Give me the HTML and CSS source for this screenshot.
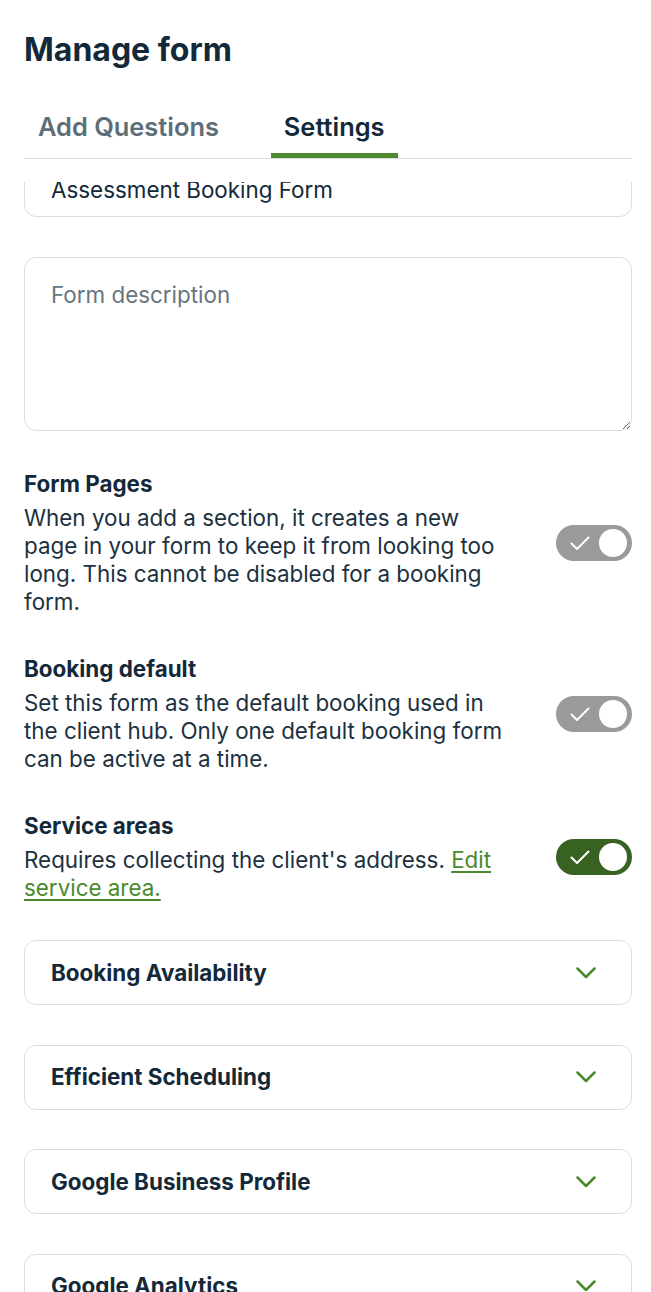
FILE: index.html
```html
<!DOCTYPE html>
<html lang="en">
<head>
<meta charset="utf-8">
<title>Manage form</title>
<link rel="stylesheet" href="styles.css">
</head>
<body>
<div class="page">
  <header class="header">
    <h1 class="title">Manage form</h1>
    <nav class="tabs">
      <div class="tab">Add Questions</div>
      <div class="tab tab-active">Settings</div>
    </nav>
  </header>
  <main class="scroll">
    <div class="scroll-inner">
      <input class="field" type="text" value="Assessment Booking Form">
      <textarea class="area" placeholder="Form description"></textarea>

      <section class="setting">
        <div class="setting-text">
          <div class="setting-title">Form Pages</div>
          <div class="setting-desc">When you add a section, it creates a new page in your form to keep it from looking too long. This cannot be disabled for a booking form.</div>
        </div>
        <div class="toggle toggle-off">
          <svg class="check" width="20" height="14" viewBox="0 0 20 14"><path d="M1.5 7.5 L7 13 L18.5 1.5" fill="none" stroke="#fff" stroke-width="2" stroke-linecap="round" stroke-linejoin="round"/></svg>
          <span class="knob"></span>
        </div>
      </section>

      <section class="setting">
        <div class="setting-text">
          <div class="setting-title">Booking default</div>
          <div class="setting-desc">Set this form as the default booking used in the client hub. Only one default booking form can be active at a time.</div>
        </div>
        <div class="toggle toggle-off">
          <svg class="check" width="20" height="14" viewBox="0 0 20 14"><path d="M1.5 7.5 L7 13 L18.5 1.5" fill="none" stroke="#fff" stroke-width="2" stroke-linecap="round" stroke-linejoin="round"/></svg>
          <span class="knob"></span>
        </div>
      </section>

      <section class="setting">
        <div class="setting-text">
          <div class="setting-title">Service areas</div>
          <div class="setting-desc">Requires collecting the client's address. <a class="link" href="#">Edit service area.</a></div>
        </div>
        <div class="toggle toggle-on">
          <svg class="check" width="20" height="14" viewBox="0 0 20 14"><path d="M1.5 7.5 L7 13 L18.5 1.5" fill="none" stroke="#fff" stroke-width="2" stroke-linecap="round" stroke-linejoin="round"/></svg>
          <span class="knob"></span>
        </div>
      </section>

      <div class="accordion">
        <span class="acc-title">Booking Availability</span>
        <svg class="chev" width="20" height="12" viewBox="0 0 20 12"><path d="M1.5 1.5 L10 10 L18.5 1.5" fill="none" stroke="#4a8a2c" stroke-width="2.5" stroke-linecap="round" stroke-linejoin="round"/></svg>
      </div>
      <div class="accordion">
        <span class="acc-title">Efficient Scheduling</span>
        <svg class="chev" width="20" height="12" viewBox="0 0 20 12"><path d="M1.5 1.5 L10 10 L18.5 1.5" fill="none" stroke="#4a8a2c" stroke-width="2.5" stroke-linecap="round" stroke-linejoin="round"/></svg>
      </div>
      <div class="accordion">
        <span class="acc-title">Google Business Profile</span>
        <svg class="chev" width="20" height="12" viewBox="0 0 20 12"><path d="M1.5 1.5 L10 10 L18.5 1.5" fill="none" stroke="#4a8a2c" stroke-width="2.5" stroke-linecap="round" stroke-linejoin="round"/></svg>
      </div>
      <div class="accordion">
        <span class="acc-title">Google Analytics</span>
        <svg class="chev" width="20" height="12" viewBox="0 0 20 12"><path d="M1.5 1.5 L10 10 L18.5 1.5" fill="none" stroke="#4a8a2c" stroke-width="2.5" stroke-linecap="round" stroke-linejoin="round"/></svg>
      </div>
    </div>
  </main>
</div>
</body>
</html>
```

FILE: styles.css
```css
* { box-sizing: border-box; }
html, body { margin: 0; padding: 0; background: #fff; }
body {
  font-family: Inter, "Noto Sans", sans-serif;
  color: #13293a;
  overflow: hidden;
}
.page {
  height: 1292px;
  display: flex;
  flex-direction: column;
  padding: 0 19px 0 24px;
}
.header {
  padding-top: 30px;
  padding-bottom: 23px;
  flex: none;
}
.title {
  margin: 0;
  font-size: 32px;
  line-height: 40px;
  font-weight: 700;
  color: #13293a;
}
.tabs {
  display: flex;
  gap: 38px;
  margin-top: 41px;
  border-bottom: 1px solid #dcdcdc;
}
.tab {
  font-size: 25.4px;
  line-height: 32px;
  font-weight: 600;
  color: #5e6e78;
  padding: 0 14px 10px;
  border-bottom: 5px solid transparent;
}
.tab-active {
  color: #13293a;
  border-bottom-color: #4e8a2e;
  padding: 0 13px 10px;
}
.scroll {
  flex: 1;
  min-height: 0;
  overflow: hidden;
}
.scroll-inner {
  display: flex;
  flex-direction: column;
}
.field {
  margin-top: -21px;
  height: 56px;
  width: 100%;
  border: 1px solid #dddddd;
  border-radius: 12px;
  padding: 0 26px;
  font-family: Inter, "Noto Sans", sans-serif;
  font-size: 22.4px;
  color: #13293a;
  background: #fff;
  outline: none;
  flex: none;
}
.area {
  margin-top: 40px;
  height: 174px;
  width: 100%;
  border: 1px solid #dddddd;
  border-radius: 12px;
  padding: 23px 26px;
  font-family: Inter, "Noto Sans", sans-serif;
  font-size: 22.4px;
  line-height: 28px;
  color: #13293a;
  background: #fff;
  outline: none;
  resize: vertical;
  display: block;
  flex: none;
}
.area::placeholder { color: #66767f; }
.setting {
  display: flex;
  align-items: center;
  gap: 48px;
  margin-top: 39px;
}
.setting-text {
  flex: 1;
  min-width: 0;
}
.setting-title {
  font-size: 22.4px;
  line-height: 28px;
  font-weight: 700;
}
.setting-desc {
  margin-top: 6px;
  font-size: 22.4px;
  line-height: 28px;
  font-weight: 400;
  color: #1c3140;
}
.link {
  color: #4a8a2c;
  text-decoration: underline;
  text-underline-offset: 3px;
  text-decoration-thickness: 2px;
}
.toggle {
  width: 76px;
  height: 36px;
  border-radius: 18px;
  flex: none;
  display: flex;
  align-items: center;
  padding: 0 5px 0 14px;
}
.toggle-off { background: #9a9a9a; }
.toggle-on { background: #386221; }
.check { flex: none; display: block; }
.knob {
  margin-left: auto;
  width: 28px;
  height: 28px;
  border-radius: 50%;
  background: #fff;
}
.accordion {
  margin-top: 38px;
  height: 65px;
  flex: none;
  border: 1px solid #dddddd;
  border-radius: 12px;
  display: flex;
  align-items: center;
  justify-content: space-between;
  padding: 0 35px 0 26px;
}
.accordion + .accordion { margin-top: 39.5px; }
.acc-title {
  font-size: 22.4px;
  line-height: 28px;
  font-weight: 700;
  color: #13293a;
}
.chev { display: block; }
```
